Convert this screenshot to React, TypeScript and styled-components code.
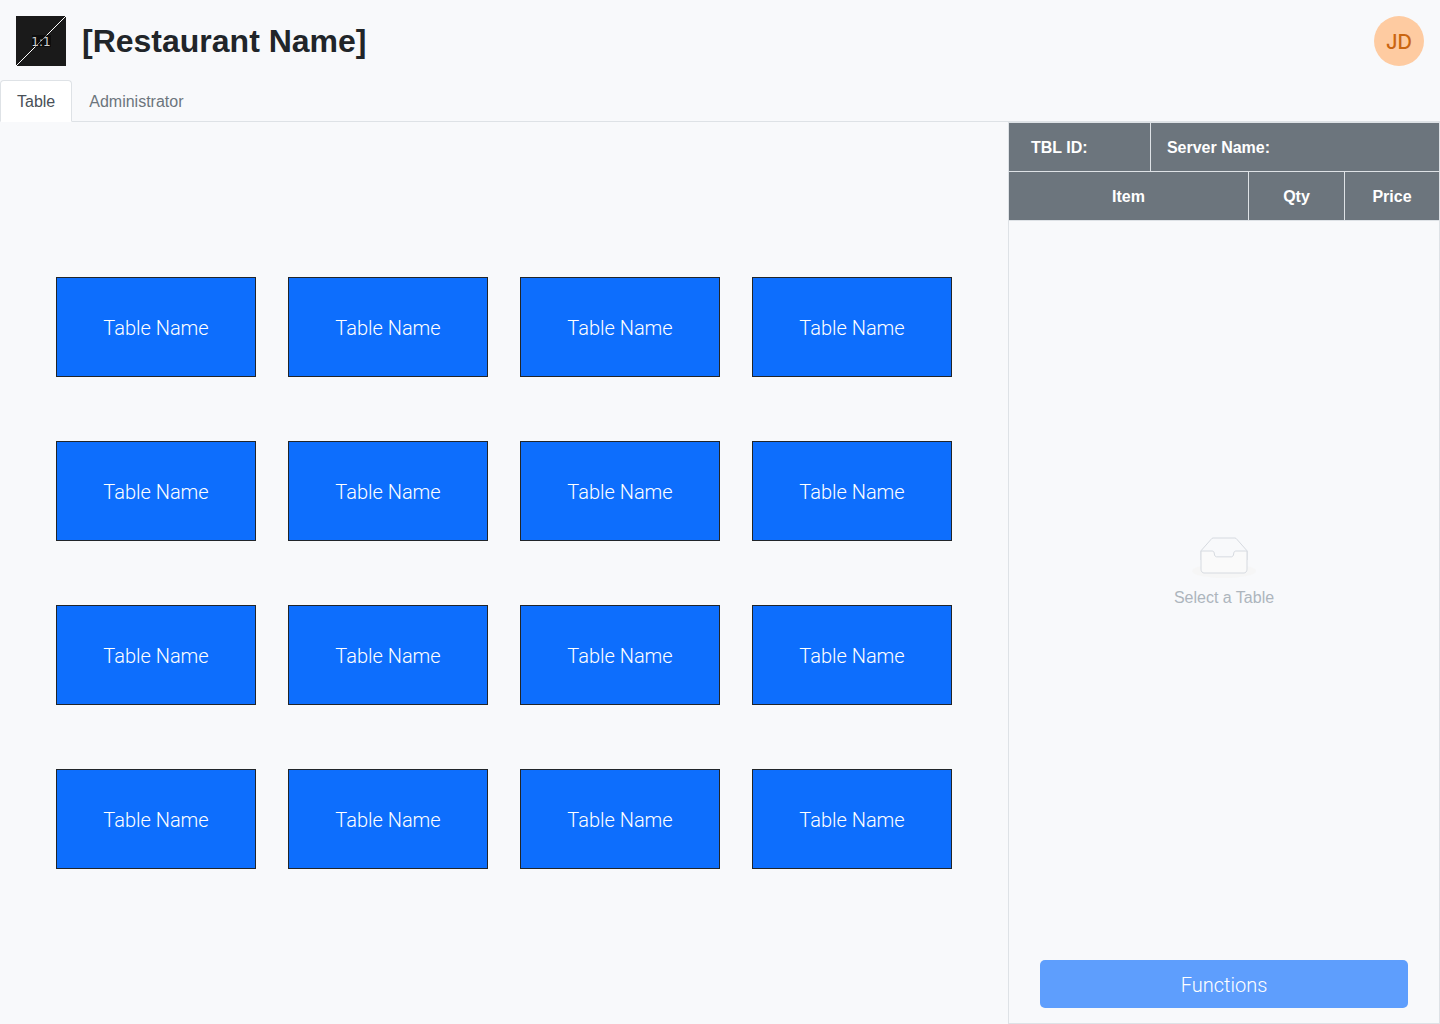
import React, { useState } from "react";
import styled, { createGlobalStyle } from "styled-components";

const color = {
  page: "#f8f9fb",
  line: "#dee2e6",
  ink: "#212529",
  muted: "#6c757d",
  primary: "#0d6efd",
};

const lightFont = `Roboto, "Liberation Sans", Arial, sans-serif`;

const GlobalStyle = createGlobalStyle`
  *, *::before, *::after { box-sizing: border-box; }
  body {
    margin: 0;
    background: ${color.page};
    color: ${color.ink};
    font: 400 16px/24px "Liberation Sans", Arial, sans-serif;
  }
  button { font: inherit; cursor: pointer; }
`;

const Page = styled.div`
  display: flex;
  flex-direction: column;
  min-height: 100vh;
`;

const Header = styled.header`
  display: flex;
  align-items: center;
  gap: 16px;
  padding: 16px 16px 14px;
`;

const Logo = styled.svg`
  display: block;
  flex: none;
  width: 50px;
  height: 50px;
`;

const Title = styled.h1`
  flex: 1;
  margin: 0;
  font-size: 32px;
  line-height: 50px;
  font-weight: 700;
`;

const Avatar = styled.button`
  width: 50px;
  height: 50px;
  padding: 0;
  border: 0;
  border-radius: 50%;
  background: #fecba1;
  color: #ca6510;
  font: 500 20px/52px Inter, "Liberation Sans", Arial, sans-serif;
`;

const Tabs = styled.nav`
  display: flex;
  box-shadow: inset 0 -1px ${color.line};
`;

const Tab = styled.button<{ $active: boolean }>`
  padding: 9px 16px 7px;
  border: 1px solid ${(p) => (p.$active ? color.line : "transparent")};
  border-bottom-color: ${(p) => (p.$active ? "#fff" : "transparent")};
  border-radius: 4px 4px 0 0;
  background: ${(p) => (p.$active ? "#fff" : "transparent")};
  color: ${(p) => (p.$active ? "#495057" : color.muted)};
`;

const Body = styled.main`
  flex: 1;
  display: grid;
  grid-template-columns: 7fr 3fr;
`;

const Floor = styled.section`
  display: grid;
  grid-template-columns: repeat(4, 200px);
  gap: 64px 32px;
  place-content: center;
`;

const TableButton = styled.button`
  height: 100px;
  padding: 2px 0 0;
  border: 1px solid ${color.ink};
  background: ${color.primary};
  color: #fff;
  font: 300 20px/30px ${lightFont};
`;

const Order = styled.aside`
  display: flex;
  flex-direction: column;
  border: 1px solid ${color.line};
`;

const OrderTable = styled.table`
  width: 100%;
  table-layout: fixed;
  border-spacing: 0;
  background: ${color.muted};
  color: #fff;
`;

const HeadCell = styled.th<{ $pad?: number }>`
  height: 49px;
  padding: 2px ${(p) => p.$pad ?? 0}px 0;
  border-bottom: 1px solid ${color.line};
  text-align: ${(p) => (p.$pad ? "left" : "center")};
  font-weight: 700;

  &:not(:last-child) {
    border-right: 1px solid ${color.line};
  }
`;

const Col = styled.col<{ $width?: string }>`
  width: ${(p) => p.$width ?? "auto"};
`;

const Empty = styled.div`
  flex: 1;
  display: flex;
  flex-direction: column;
  align-items: center;
  justify-content: center;
  gap: 8px;
  color: #adb5bd;
`;

const Message = styled.p`
  margin: 0;
`;

const Footer = styled.footer`
  padding: 34px 31px 15px;
`;

const FunctionsButton = styled.button`
  width: 100%;
  padding: 10px 16px 8px;
  border: 0;
  border-radius: 5px;
  background: #5e9efd;
  color: #fff;
  font: 300 20px/30px ${lightFont};
  cursor: default;
`;

const EmptyBox = () => (
  <svg width="64" height="41" viewBox="0 0 64 41" aria-hidden="true">
    <g transform="translate(0 1)" fill="none" fillRule="evenodd">
      <ellipse fill="#f5f5f5" cx="32" cy="33" rx="32" ry="7" opacity="0.8" />
      <g fillRule="nonzero" stroke="#d6dae0">
        <path d="M55 12.76L44.854 1.258C44.367.474 43.656 0 42.907 0H21.093c-.749 0-1.46.474-1.947 1.257L9 12.761V22h46v-9.24z" />
        <path
          fill="#fafafa"
          d="M41.613 15.931c0-1.605.994-2.93 2.227-2.931H55v18.137C55 33.26 53.68 35 52.05 35h-40.1C10.32 35 9 33.259 9 31.137V13h11.16c1.233 0 2.227 1.323 2.227 2.928v.022c0 1.605 1.005 2.901 2.237 2.901h14.752c1.232 0 2.237-1.308 2.237-2.913v-.007z"
        />
      </g>
    </g>
  </svg>
);

const tabNames = ["Table", "Administrator"];
const tables = Array.from({ length: 16 }, (_, i) => ({ id: i + 1, name: "Table Name" }));

export default function App() {
  const [tab, setTab] = useState(tabNames[0]);

  return (
    <>
      <GlobalStyle />
      <Page>
        <Header>
          <Logo viewBox="0 0 50 50" role="img" aria-label="Logo">
            <rect width="50" height="50" fill="#1a1a1a" />
            <path d="M0 50L50 0" stroke="#fff" />
            <rect x="16" y="19" width="19" height="12" fill="#000" opacity="0.5" />
            <text x="25" y="30" textAnchor="middle" fill="#d0d0d0" fontFamily="DejaVu Sans, sans-serif" fontSize="12">
              1:1
            </text>
          </Logo>
          <Title>[Restaurant Name]</Title>
          <Avatar type="button">JD</Avatar>
        </Header>
        <Tabs>
          {tabNames.map((name) => (
            <Tab key={name} type="button" $active={name === tab} onClick={() => setTab(name)}>
              {name}
            </Tab>
          ))}
        </Tabs>
        <Body>
          <Floor>
            {tables.map((t) => (
              <TableButton key={t.id} type="button">
                {t.name}
              </TableButton>
            ))}
          </Floor>
          <Order>
            <OrderTable>
              <colgroup>
                <Col $width="33%" />
                <Col />
                <Col $width="96px" />
                <Col $width="94px" />
              </colgroup>
              <thead>
                <tr>
                  <HeadCell $pad={22}>TBL ID:</HeadCell>
                  <HeadCell $pad={16} colSpan={3}>
                    Server Name:
                  </HeadCell>
                </tr>
                <tr>
                  <HeadCell colSpan={2}>Item</HeadCell>
                  <HeadCell>Qty</HeadCell>
                  <HeadCell>Price</HeadCell>
                </tr>
              </thead>
            </OrderTable>
            <Empty>
              <EmptyBox />
              <Message>Select a Table</Message>
            </Empty>
            <Footer>
              <FunctionsButton type="button" disabled>
                Functions
              </FunctionsButton>
            </Footer>
          </Order>
        </Body>
      </Page>
    </>
  );
}
